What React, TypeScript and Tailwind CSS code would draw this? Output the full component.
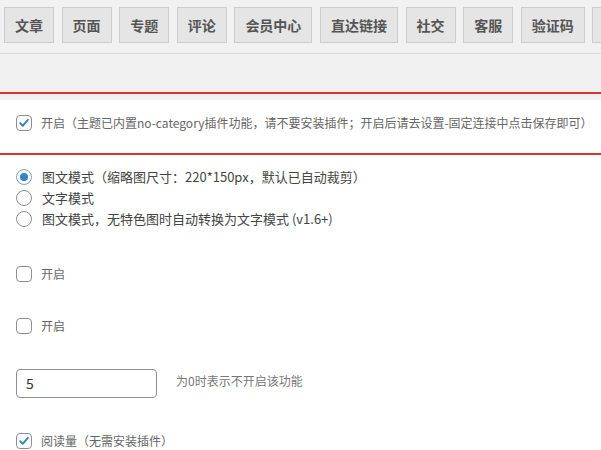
import React from "react";

const tabs = ["文章", "页面", "专题", "评论", "会员中心", "直达链接", "社交", "客服", "验证码"];

function Checkbox({ checked }: { checked?: boolean }) {
  return (
    <span className="flex h-4 w-4 shrink-0 items-center justify-center rounded-[4px] border border-[#8c8f94] bg-white">
      {checked && (
        <svg viewBox="0 0 16 16" className="h-[14px] w-[14px]">
          <path d="M3.6 8.2 L6.6 11.2 L12.4 4.4" fill="none" stroke="#3582c4" strokeWidth="2.2" strokeLinecap="round" strokeLinejoin="round" />
        </svg>
      )}
    </span>
  );
}

function Radio({ checked }: { checked?: boolean }) {
  return (
    <span className={"flex h-4 w-4 shrink-0 items-center justify-center rounded-full border bg-white " + (checked ? "border-[#7ea4cf]" : "border-[#8c8f94]")}>
      {checked && <span className="h-2 w-2 rounded-full bg-[#3582c4]" />}
    </span>
  );
}

export default function App() {
  return (
    <div className="h-[450px] w-[601px] overflow-hidden bg-white" style={{ fontFamily: '"Noto Sans CJK SC", "Noto Sans", sans-serif' }}>
      {/* tab bar */}
      <div className="bg-[#f1f1f1]">
        <div className="flex gap-[7.6px] overflow-hidden whitespace-nowrap pl-1 pt-[7px] pb-[10px]">
          {tabs.map((t) => (
            <div
              key={t}
              className="flex h-9 shrink-0 items-center border border-[#cccccc] bg-[#e5e5e5] px-[10px] text-[14px] font-bold text-[#555555]"
            >
              {t}
            </div>
          ))}
          {/* next tab, cut off at the window edge */}
          <div className="h-9 w-[50px] shrink-0 border border-[#cccccc] bg-[#e5e5e5]" />
        </div>
        <div className="h-[39px] border-t border-[#d5d5d5]" />
      </div>

      {/* highlighted row */}
      <div className="border-y-2 border-[#dc3232]">
        <div className="h-[6px] bg-[#f1f1f1]" />
        <div className="flex h-[53px] items-start gap-[9px] pt-[15px] pl-4">
          <Checkbox checked />
          <span className="text-[12px] leading-4 text-[#666666]">
            开启（主题已内置no-category插件功能，请不要安装插件；开启后请去设置-固定连接中点击保存即可）
          </span>
        </div>
      </div>

      {/* list mode */}
      <div className="pl-4 pt-[11px]">
        {["图文模式（缩略图尺寸：220*150px，默认已自动裁剪）", "文字模式", "图文模式，无特色图时自动转换为文字模式 (v1.6+)"].map((label, i) => (
          <div key={label} className="flex h-[21px] items-center gap-[10px]">
            <Radio checked={i === 0} />
            <span className="text-[13px] text-[#444444]">{label}</span>
          </div>
        ))}
      </div>

      <div className="mt-[37px] flex items-center gap-[9px] pl-4">
        <Checkbox />
        <span className="text-[12px] leading-4 text-[#666666]">开启</span>
      </div>

      <div className="mt-9 flex items-center gap-[9px] pl-4">
        <Checkbox />
        <span className="text-[12px] leading-4 text-[#666666]">开启</span>
      </div>

      <div className="mt-[35px] flex items-start pl-4">
        <div className="flex h-[29px] w-[141px] items-center rounded-[4px] border border-[#8c8f94] bg-white pl-[9px] text-[14px] text-[#2c3338]">
          5
        </div>
        <span className="ml-[19px] mt-[3px] text-[12px] text-[#777777]">为0时表示不开启该功能</span>
      </div>

      <div className="mt-[35px] flex items-center gap-[9px] pl-4">
        <Checkbox checked />
        <span className="text-[12px] leading-4 text-[#666666]">阅读量（无需安装插件）</span>
      </div>
    </div>
  );
}
